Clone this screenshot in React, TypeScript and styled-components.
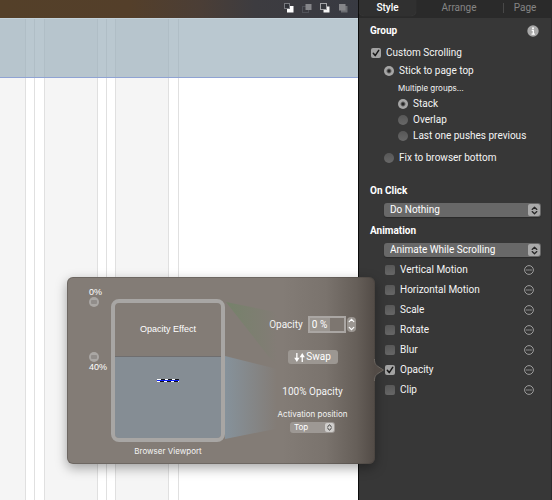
import React from "react";
import styled, { createGlobalStyle, css } from "styled-components";

const GlobalStyle = createGlobalStyle`
  *, *::before, *::after { box-sizing: border-box; }
  body {
    margin: 0;
    background: #fff;
    font-family: Roboto, "Liberation Sans", sans-serif;
    font-size: 10px;
    line-height: 14px;
    color: #f4f4f4;
  }
  button, input, select { font: inherit; color: inherit; margin: 0; }
  button { padding: 0; border: 0; background: none; }
`;

const smallText = css`
  font-family: Inter, "Liberation Sans", sans-serif;
  font-size: 8px;
  line-height: 12px;
  white-space: nowrap;
`;

const Page = styled.div`
  position: relative;
  display: grid;
  grid-template-columns: minmax(0, 1fr) 194px;
  min-height: 100vh;
  overflow: hidden;
`;

/* ---------- canvas ---------- */

const Canvas = styled.main`
  display: flex;
  flex-direction: column;
  background: #fff;
`;

const Toolbar = styled.div`
  display: flex;
  justify-content: flex-end;
  align-items: center;
  gap: 8px;
  height: 18px;
  padding: 0 10px 2px 0;
  background: linear-gradient(90deg, #544029 0, #543f2a 130px, #4b3e36 200px, #3d3c40 255px, #383a42 100%);
`;

const ToolButton = styled.button`
  display: flex;
  width: 10px;
  height: 10px;
`;

const Stage = styled.div`
  position: relative;
  flex: 1;
  display: flex;
`;

const GridColumn = styled.div<{ $width: number; $filled?: boolean }>`
  width: ${(p) => p.$width}px;
  border-right: 1px solid #e0e0e0;
  background: ${(p) => (p.$filled ? "#f5f5f5" : "#fff")};
`;

const HeaderBand = styled.div`
  position: absolute;
  top: 0;
  left: 0;
  right: 0;
  height: 60px;
  background: rgba(151, 171, 184, 0.66);
  border-top: 1px solid #c4d2da;
  border-bottom: 1px solid #8fa3d3;
`;

/* ---------- inspector ---------- */

const Inspector = styled.aside`
  display: flex;
  flex-direction: column;
  background: #373737;
  border-left: 1px solid #0c0c0c;
  border-right: 1px solid #2b2b2b;
`;

const Tabs = styled.div`
  display: flex;
  height: 18px;
  background: #2a2a2a;
`;

const Tab = styled.button<{ $active?: boolean; $width: number }>`
  width: ${(p) => p.$width}px;
  height: 16px;
  border-radius: 0 0 5px 5px;
  color: ${(p) => (p.$active ? "#fff" : "#858585")};
  ${(p) => p.$active && css`
    background: #303030;
    font-weight: 500;
    box-shadow: 0 0 1px #4a4a4a;
  `}
`;

const TabDivider = styled.span`
  width: 1px;
  height: 10px;
  margin: 3px 0 0 1px;
  background: #484848;
`;

const Panel = styled.div`
  display: flex;
  flex-direction: column;
  padding: 5px 10px 0 11px;
`;

const Heading = styled.h2`
  display: flex;
  align-items: center;
  justify-content: space-between;
  margin: 0;
  height: 16px;
  font-size: 10px;
  font-weight: 700;
  color: #fff;
`;

const InfoButton = styled.button`
  display: flex;
  width: 12px;
  height: 12px;
  margin-right: 2px;
`;

const ScrollOptions = styled.div`
  display: flex;
  flex-direction: column;
  padding: 5px 0 17px;
`;

const Option = styled.label<{ $indent: number; $height: number }>`
  display: flex;
  align-items: center;
  gap: 5px;
  height: ${(p) => p.$height}px;
  padding-left: ${(p) => p.$indent}px;
  white-space: nowrap;
`;

const GroupNote = styled.div`
  ${smallText}
  height: 16px;
  padding: 2px 0 0 28px;
`;

const Spacer = styled.div`
  height: 6px;
`;

const CheckBox = styled.input.attrs({ type: "checkbox" })`
  appearance: none;
  flex: none;
  width: 10px;
  height: 10px;
  border-radius: 2px;
  background: linear-gradient(#575757, #666);
  &:checked {
    background: #a3a3a3 url("data:image/svg+xml,%3Csvg xmlns='http://www.w3.org/2000/svg' viewBox='0 0 10 10'%3E%3Cpath d='M2.3 5.3 4.2 7.6 7.7 2.3' fill='none' stroke='%23181818' stroke-width='1.5' stroke-linecap='round' stroke-linejoin='round'/%3E%3C/svg%3E");
  }
`;

const Radio = styled.input.attrs({ type: "radio" })`
  appearance: none;
  flex: none;
  width: 10px;
  height: 10px;
  border-radius: 50%;
  background: linear-gradient(#575757, #686868);
  &:checked {
    background: radial-gradient(circle, #262626 0 1px, #a6a6a6 3px);
  }
`;

const SelectShell = styled.div<{ $small?: boolean }>`
  position: relative;
  display: flex;
  align-items: center;
  height: ${(p) => (p.$small ? 11 : 14)}px;
  border-radius: 3px;
  background: ${(p) => (p.$small ? "#9d9894" : "#686868")};
  ${(p) => (p.$small
    ? css`width: 45px;`
    : css`margin: 0 0 0 14px; box-shadow: 0 1px 1px rgba(0, 0, 0, 0.25);`)}
`;

const Select = styled.select<{ $small?: boolean }>`
  appearance: none;
  width: 100%;
  height: 100%;
  padding: 0 16px 0 ${(p) => (p.$small ? 4 : 6)}px;
  border: 0;
  background: none;
  font-size: ${(p) => (p.$small ? 8 : 10)}px;
  line-height: ${(p) => (p.$small ? 11 : 14)}px;
  color: #fff;
`;

const SelectCap = styled.span<{ $small?: boolean }>`
  position: absolute;
  right: 1px;
  top: 1px;
  bottom: 1px;
  width: ${(p) => (p.$small ? 9 : 12)}px;
  display: flex;
  align-items: center;
  justify-content: center;
  border-radius: 2px;
  background: ${(p) => (p.$small ? "#d0cecc" : "#a9a9a9")};
  pointer-events: none;
`;

const Section = styled.section`
  display: flex;
  flex-direction: column;
  gap: 4px;
  padding-bottom: 6px;
`;

const EffectRow = styled.div`
  display: flex;
  align-items: center;
  justify-content: space-between;
  height: 20px;
  padding-right: 7px;
`;

const EffectList = styled.div`
  display: flex;
  flex-direction: column;
  margin-top: -1px;
`;

const MoreButton = styled.button`
  display: flex;
  width: 10px;
  height: 10px;
`;

/* ---------- popover ---------- */

const Popover = styled.section`
  position: absolute;
  top: 277px;
  right: 177px;
  width: 308px;
  display: grid;
  grid-template-columns: 26px 114px minmax(0, 1fr);
  padding: 0 0 7px 18px;
  border-radius: 6px;
  background: linear-gradient(90deg, #837c76 0, #837c76 70%, #7a736d 84%, #665f59 94%, #524b46 100%);
  box-shadow: inset 0 0 0 1px rgba(60, 56, 52, 0.3), 0 4px 12px rgba(0, 0, 0, 0.35);
`;

const PopoverArrow = styled.svg`
  position: absolute;
  left: 100%;
  top: 82px;
  width: 10px;
  height: 22px;
  margin-left: -1px;
`;

const Beams = styled.svg`
  position: absolute;
  left: 158px;
  top: 22px;
  width: 60px;
  height: 144px;
`;

const Markers = styled.div`
  display: flex;
  flex-direction: column;
  justify-content: space-between;
  height: 85px;
  margin-top: 10px;
  padding-left: 4px;
  font-family: "Liberation Sans", Arial, sans-serif;
  font-size: 9px;
  line-height: 10px;
  color: #fff;
`;

const Marker = styled.div`
  display: flex;
  flex-direction: column;
  white-space: nowrap;
`;

const Knob = styled.button`
  display: flex;
  align-items: center;
  justify-content: center;
  width: 10px;
  height: 10px;
  border-radius: 50%;
  background: #aaa7a4;
`;

const KnobGrip = styled.span`
  width: 6px;
  height: 4px;
  border-radius: 1px;
  background: #918d8a;
`;

const ViewportColumn = styled.figure`
  display: flex;
  flex-direction: column;
  align-items: center;
  margin: 22px 0 0;
`;

const ViewportFrame = styled.div`
  display: flex;
  flex-direction: column;
  width: 100%;
  height: 143px;
  border: 4px solid #a8a6a4;
  border-radius: 8px;
  background: linear-gradient(transparent 0 53px, #6f6e6f 53px 54px, #858d94 54px);
  background-clip: padding-box;
  font-family: "Liberation Sans", Arial, sans-serif;
  font-size: 9px;
  line-height: 12px;
  text-align: center;
  color: #fff;
`;

const EffectTitle = styled.div`
  height: 76px;
  padding-top: 20px;
`;

const Dashes = styled.svg`
  display: block;
  width: 22px;
  height: 3px;
  margin: 0 auto;
`;

const Caption = styled.figcaption`
  ${smallText}
  margin-top: 3px;
`;

const Controls = styled.div`
  display: flex;
  flex-direction: column;
  align-items: center;
  padding: 39px 0 0 25px;
`;

const OpacityField = styled.label`
  display: flex;
  align-items: center;
  white-space: nowrap;
`;

const OpacityInput = styled.input`
  width: 38px;
  height: 17px;
  margin-left: 5px;
  padding: 0 0 0 2px;
  border: 2px solid #aaa6a3;
  background: linear-gradient(90deg, #9a9590 0 20px, #7d7670 20px);
  color: #fff;
`;

const Stepper = styled.span`
  display: flex;
  flex-direction: column;
  width: 9px;
  height: 15px;
  margin-left: 1px;
  border-radius: 4px;
  background: #9a9590;
`;

const StepButton = styled.button`
  display: flex;
  align-items: center;
  justify-content: center;
  width: 9px;
  flex: 1;
`;

const SwapButton = styled.button`
  display: flex;
  align-items: center;
  justify-content: center;
  gap: 1px;
  width: 50px;
  height: 14px;
  margin-top: 17px;
  border-radius: 3px;
  background: #9c9792;
  color: #fff;
`;

const TargetOpacity = styled.div`
  margin-top: 21px;
`;

const ActivationLabel = styled.label`
  ${smallText}
  display: flex;
  flex-direction: column;
  align-items: center;
  gap: 2px;
  margin-top: 9px;
`;

/* ---------- drawings ---------- */

type ToolKind = "front" | "forward" | "backward" | "back";

function LayerIcon({ kind }: { kind: ToolKind }) {
  return (
    <svg width="10" height="10" viewBox="0 0 10 10">
      {kind === "front" && (
        <>
          <rect x="3" y="3" width="6.5" height="6.5" fill="#fff" />
          <rect x="0.5" y="0.5" width="5" height="5" fill="#303238" stroke="#77797e" />
        </>
      )}
      {kind === "forward" && (
        <>
          <rect x="0.5" y="3.5" width="6" height="6" fill="none" stroke="#505259" />
          <rect x="3.5" y="1" width="6" height="6" fill="#85868a" />
        </>
      )}
      {kind === "backward" && (
        <>
          <path d="M7 3.5h2.500v6h-6V7H7z" fill="#f4f4f4" />
          <rect x="0.5" y="0.5" width="6" height="6" fill="#35373d" stroke="#a4a5a8" />
        </>
      )}
      {kind === "back" && (
        <>
          <rect x="3" y="3" width="6.5" height="6.5" fill="#6c6e73" />
          <rect x="1" y="1" width="6.5" height="6.5" fill="#85868a" />
        </>
      )}
    </svg>
  );
}

function Chevrons({ size, color }: { size: number; color: string }) {
  return (
    <svg width={size} height={size} viewBox="0 0 10 10" fill="none" stroke={color} strokeWidth="1.4" strokeLinecap="round" strokeLinejoin="round">
      <path d="M2.400 3.800 5 1.400l2.600 2.400M2.400 6.200 5 8.600l2.600-2.400" />
    </svg>
  );
}

function MoreIcon() {
  return (
    <svg width="10" height="10" viewBox="0 0 10 10">
      <circle cx="5" cy="5" r="4.4" fill="none" stroke="#a8a8a8" strokeWidth="0.9" />
      <path d="M2.300 5h5.400" stroke="#b4b4b4" strokeWidth="1.1" strokeDasharray="1.3 0.7" />
    </svg>
  );
}

const tools: { kind: ToolKind; label: string }[] = [
  { kind: "front", label: "Bring to front" },
  { kind: "forward", label: "Bring forward" },
  { kind: "backward", label: "Send backward" },
  { kind: "back", label: "Send to back" },
];

const columns = [
  { width: 26, filled: true },
  { width: 9 },
  { width: 10 },
  { width: 53, filled: true },
  { width: 9 },
  { width: 9 },
  { width: 53, filled: true },
  { width: 10 },
];

const effects = ["Vertical Motion", "Horizontal Motion", "Scale", "Rotate", "Blur", "Opacity", "Clip"];

function PopUp({ label, value, small }: { label: string; value: string; small?: boolean }) {
  return (
    <SelectShell $small={small}>
      <Select $small={small} aria-label={label} defaultValue={value}>
        <option>{value}</option>
      </Select>
      <SelectCap $small={small}>
        <Chevrons size={small ? 7 : 9} color="#262626" />
      </SelectCap>
    </SelectShell>
  );
}

function OpacityPopover() {
  return (
    <Popover aria-label="Opacity settings">
      <PopoverArrow viewBox="0 0 10 22">
        <path d="M0 0C0 5 2 6 4 7.500L9.500 11 4 14.500C2 16 0 17 0 22z" fill="#524b46" />
        <path d="M.5 0C.5 5 2 6 4 7.500L9.500 11 4 14.500C2 16 .5 17 .5 22" fill="none" stroke="#77716b" strokeWidth="0.8" />
      </PopoverArrow>
      <Beams viewBox="0 0 60 144">
        <defs>
          <linearGradient id="greenBeam" gradientUnits="userSpaceOnUse" x1="0" x2="52" y1="0" y2="0">
            <stop offset="0" stopColor="#728367" stopOpacity="0.8" />
            <stop offset="1" stopColor="#728367" stopOpacity="0" />
          </linearGradient>
          <linearGradient id="blueBeam" gradientUnits="userSpaceOnUse" x1="0" x2="52" y1="0" y2="0">
            <stop offset="0" stopColor="#86929b" />
            <stop offset="1" stopColor="#86929b" stopOpacity="0" />
          </linearGradient>
        </defs>
        <path d="M1 3 60 15V76L44 58z" fill="url(#greenBeam)" />
        <path d="M0 57 60 72V128L0 140z" fill="url(#blueBeam)" />
      </Beams>
      <Markers>
        <Marker>
          0%
          <Knob aria-label="Start position"><KnobGrip /></Knob>
        </Marker>
        <Marker>
          <Knob aria-label="End position"><KnobGrip /></Knob>
          40%
        </Marker>
      </Markers>
      <ViewportColumn>
        <ViewportFrame>
          <EffectTitle>Opacity Effect</EffectTitle>
          <Dashes viewBox="0 0 22 3">
            <path d="M0 .5h22" stroke="#fff" />
            <path d="M4 .5h18" stroke="#111" strokeDasharray="4 3" />
            <path d="M0 1.500h22" stroke="#0a1cff" />
            <path d="M0 2.500h22" stroke="#111" />
            <path d="M0 2.500h22" stroke="#fff" strokeDasharray="3 4" />
          </Dashes>
        </ViewportFrame>
        <Caption>Browser Viewport</Caption>
      </ViewportColumn>
      <Controls>
        <OpacityField>
          Opacity
          <OpacityInput defaultValue="0 %" />
          <Stepper>
            <StepButton aria-label="Increase opacity">
              <svg width="7" height="5" viewBox="0 0 7 5"><path d="M1.200 3.600 3.500 1.300l2.300 2.300" fill="none" stroke="#fff" strokeWidth="1.2" strokeLinecap="round" /></svg>
            </StepButton>
            <StepButton aria-label="Decrease opacity">
              <svg width="7" height="5" viewBox="0 0 7 5"><path d="M1.200 1.400 3.500 3.700l2.300-2.300" fill="none" stroke="#fff" strokeWidth="1.2" strokeLinecap="round" /></svg>
            </StepButton>
          </Stepper>
        </OpacityField>
        <SwapButton>
          <svg width="11" height="9" viewBox="0 0 11 9">
            <path d="M2.200 0h1.300v4.700H5.500L2.850 9 .2 4.700h2zM7.600 9h1.300V4.300h2L8.250 0 5.600 4.300h2z" fill="#fff" />
          </svg>
          Swap
        </SwapButton>
        <TargetOpacity>100% Opacity</TargetOpacity>
        <ActivationLabel>
          Activation position
          <PopUp small label="Activation position" value="Top" />
        </ActivationLabel>
      </Controls>
    </Popover>
  );
}

export default function App() {
  return (
    <Page>
      <GlobalStyle />
      <Canvas>
        <Toolbar>
          {tools.map((t) => (
            <ToolButton key={t.kind} aria-label={t.label}><LayerIcon kind={t.kind} /></ToolButton>
          ))}
        </Toolbar>
        <Stage>
          {columns.map((c, i) => (
            <GridColumn key={i} $width={c.width} $filled={c.filled} />
          ))}
          <HeaderBand />
        </Stage>
      </Canvas>
      <Inspector>
        <Tabs>
          <Tab $active $width={57}>Style</Tab>
          <Tab $width={86}>Arrange</Tab>
          <TabDivider />
          <Tab $width={42}>Page</Tab>
        </Tabs>
        <Panel>
          <Heading>
            Group
            <InfoButton aria-label="Group help">
              <svg width="12" height="12" viewBox="0 0 12 12">
                <circle cx="6" cy="6" r="5.7" fill="#a9a9a9" />
                <circle cx="6" cy="3.2" r="1" fill="#fff" />
                <path d="M4.700 5.300H6.300V9M4.500 9.100h3.400" fill="none" stroke="#fff" strokeWidth="1.3" />
              </svg>
            </InfoButton>
          </Heading>
          <ScrollOptions>
            <Option $indent={1} $height={18}><CheckBox defaultChecked />Custom Scrolling</Option>
            <Option $indent={14} $height={18}><Radio name="stick" defaultChecked />Stick to page top</Option>
            <GroupNote>Multiple groups…</GroupNote>
            <Option $indent={28} $height={16}><Radio name="multiple" defaultChecked />Stack</Option>
            <Option $indent={28} $height={16}><Radio name="multiple" />Overlap</Option>
            <Option $indent={28} $height={16}><Radio name="multiple" />Last one pushes previous</Option>
            <Spacer />
            <Option $indent={14} $height={16}><Radio name="stick" />Fix to browser bottom</Option>
          </ScrollOptions>
          <Section>
            <Heading>On Click</Heading>
            <PopUp label="On Click" value="Do Nothing" />
          </Section>
          <Section>
            <Heading>Animation</Heading>
            <PopUp label="Animation" value="Animate While Scrolling" />
            <EffectList>
              {effects.map((name) => (
                <EffectRow key={name}>
                  <Option $indent={15} $height={20}>
                    <CheckBox defaultChecked={name === "Opacity"} />
                    {name}
                  </Option>
                  <MoreButton aria-label={`${name} options`}><MoreIcon /></MoreButton>
                </EffectRow>
              ))}
            </EffectList>
          </Section>
        </Panel>
      </Inspector>
      <OpacityPopover />
    </Page>
  );
}
